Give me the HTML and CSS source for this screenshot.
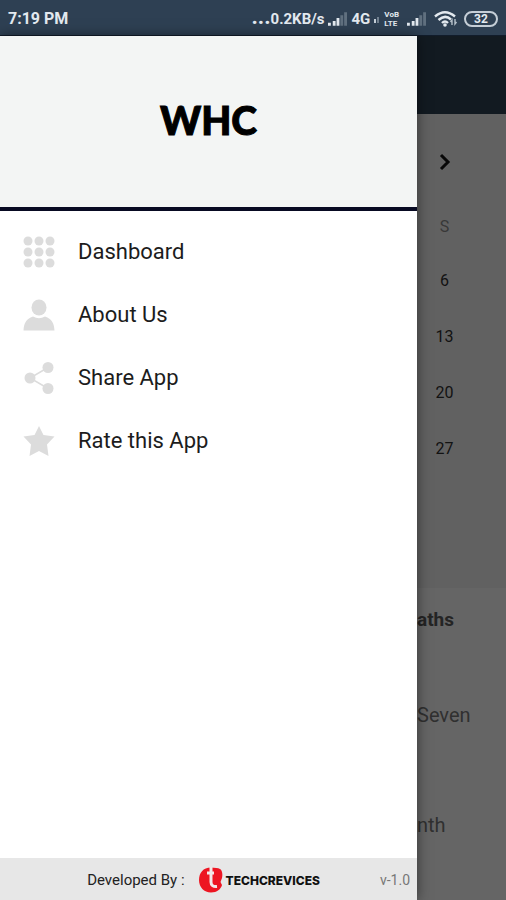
FILE: index.html
```html
<!DOCTYPE html>
<html lang="en">
<head>
    <meta charset="UTF-8" />
    <meta name="viewport" content="width=device-width, initial-scale=1.0"/>
    <title>WHC</title>
    <link rel="stylesheet" href="styles.css">
</head>
<body>
<header class="status-bar">
    <span class="time">7:19 PM</span>
    <div class="status-icons">
        <span class="speed"><span class="dots">...</span>0.2KB/s</span>
        <svg class="signal" viewBox="0 0 20 14">
            <path d="M0 11h3v3H0zM5 9h3v5H5zM9 6h3v8H9z" fill="#e3e9ef"/>
            <path d="M13 3h3v11h-3zM17 0h3v14h-3z" fill="#60707f"/>
        </svg>
        <span class="network">4G</span>
        <svg class="data" viewBox="0 0 6 8">
            <path d="M0 4h2v4H0z" fill="#c5ced7"/>
            <path d="M3 2h2v6H3z" fill="#71808f"/>
        </svg>
        <span class="volte"><span>VoB</span><span>LTE</span></span>
        <svg class="signal" viewBox="0 0 20 14">
            <path d="M0 11h3v3H0zM5 9h3v5H5zM9 6h3v8H9z" fill="#e3e9ef"/>
            <path d="M13 3h3v11h-3zM17 0h3v14h-3z" fill="#60707f"/>
        </svg>
        <svg class="wifi" viewBox="0 0 24 16">
            <path d="M1 5.500Q11 -3 21 5.500M4.500 9Q11 3 17 8.500M8 12Q11 9 14 12" fill="none" stroke="#e3e9ef" stroke-width="2.400"/>
            <circle cx="11" cy="14" r="1.800" fill="#e3e9ef"/>
            <path d="M18 14V9l-1.500 2M21 8v5l1.500-2" fill="none" stroke="#b4bfc9" stroke-width="1.400"/>
        </svg>
        <span class="battery">32</span>
    </div>
</header>

<div class="screen">
    <nav class="drawer">
        <div class="drawer-header">
            <h1>WHC</h1>
        </div>

        <ul class="menu">
            <li>
                <a href="#dashboard">
                    <svg viewBox="0 0 32 32">
                        <circle cx="5" cy="5" r="4.500"/><circle cx="16" cy="5" r="4.500"/><circle cx="27" cy="5" r="4.500"/>
                        <circle cx="5" cy="16" r="4.500"/><circle cx="16" cy="16" r="4.500"/><circle cx="27" cy="16" r="4.500"/>
                        <circle cx="5" cy="27" r="4.500"/><circle cx="16" cy="27" r="4.500"/><circle cx="27" cy="27" r="4.500"/>
                    </svg>
                    Dashboard
                </a>
            </li>
            <li>
                <a href="#about">
                    <svg viewBox="0 0 32 32">
                        <ellipse cx="16" cy="8.500" rx="7.500" ry="8"/>
                        <path d="M0.500 31.500C1 24 3 20 10 17.500Q16 21 22 17.500C29 20 31 24 31.500 31.500Z"/>
                    </svg>
                    About Us
                </a>
            </li>
            <li>
                <a href="#share">
                    <svg viewBox="0 0 32 32">
                        <path d="M25 5.500L7 16L25 26.500" fill="none" stroke="#dcdcdc" stroke-width="1.500"/>
                        <circle cx="25" cy="5.500" r="5.500"/><circle cx="7" cy="16" r="5.500"/><circle cx="25" cy="26.500" r="5.500"/>
                    </svg>
                    Share App
                </a>
            </li>
            <li>
                <a href="#rate">
                    <svg viewBox="0 0 32 32">
                        <path d="M16 1L20.500 10L31.500 11.500L24 19.500L25.500 31L16 26L6.500 31L8 19.500L0.500 11.500L11.500 10Z"/>
                    </svg>
                    Rate this App
                </a>
            </li>
        </ul>

        <footer class="drawer-footer">
            <div class="credit">
                <span>Developed By :</span>
                <span class="brand">
                    <svg viewBox="0 0 26 26">
                        <path d="M13 0.500C5 0.500 1 6 1 13S6 25.500 13 25.500C19 25.500 23 22 24 18L22.500 15L24 11C25 7 24 3 22 2Q19 0.500 13 0.500Z" fill="#ed1522"/>
                        <path d="M13 0V15Q13 20 19 19.500M9 6H16" fill="none" stroke="#f2e8e8" stroke-width="3"/>
                    </svg>
                    TECHCREVICES
                </span>
            </div>
            <span class="version">v-1.0</span>
        </footer>
    </nav>

    <main class="page">
        <div class="app-bar"></div>
        <section class="calendar">
            <button class="next" type="button" aria-label="Next month">
                <svg viewBox="0 0 12 18"><path d="M2 2L9 9L2 16" fill="none" stroke="#080808" stroke-width="3"/></svg>
            </button>
            <span class="weekday">S</span>
            <span class="day">6</span>
            <span class="day">13</span>
            <span class="day">20</span>
            <span class="day">27</span>
        </section>
        <section class="events">
            <h2>aths</h2>
            <p>Seven</p>
            <p>nth</p>
        </section>
    </main>
</div>
</body>
</html>
```
FILE: styles.css
```css
* {
    box-sizing: border-box;
}

body {
    margin: 0;
    min-height: 100vh;
    display: flex;
    flex-direction: column;
    font-family: Roboto, Arial, sans-serif;
    background-color: #656565;
}

h1,
h2,
p,
ul {
    margin: 0;
    padding: 0;
}

/* status bar */
.status-bar {
    display: flex;
    align-items: center;
    justify-content: space-between;
    height: 36px;
    padding: 2px 8px 0;
    background-color: #2e4053;
    border-bottom: 1px solid #111c2b;
    color: #e3e9ef;
    font-size: 16px;
    font-weight: 700;
}

.status-icons {
    display: flex;
    align-items: center;
    gap: 4px;
}

.speed {
    font-size: 15px;
    line-height: 16px;
    padding-bottom: 2px;
}

.dots {
    font-size: 22px;
}

.signal {
    width: 19px;
    height: 14px;
}

.network {
    font-size: 15px;
}

.data {
    width: 6px;
    height: 8px;
}

.volte {
    display: flex;
    flex-direction: column;
    font-size: 8px;
    line-height: 9px;
    margin-right: 4px;
}

.wifi {
    width: 24px;
    height: 16px;
    margin-left: 4px;
}

.battery {
    width: 34px;
    height: 16px;
    margin-left: 2px;
    border: 2px solid #c5ced7;
    border-radius: 8px;
    font-size: 12px;
    line-height: 12px;
    text-align: center;
}

.screen {
    flex: 1;
    display: flex;
}

/* drawer */
.drawer {
    flex: 1;
    display: flex;
    flex-direction: column;
    background-color: #fff;
    box-shadow: 0 0 12px rgba(0, 0, 0, 0.5);
    z-index: 1;
}

.drawer-header {
    display: flex;
    align-items: center;
    justify-content: center;
    height: 175px;
    padding-bottom: 4px;
    background-color: #f3f5f4;
    border-bottom: 4px solid #080a22;
}

.drawer-header h1 {
    font-family: Lato, sans-serif;
    font-size: 39px;
    font-weight: 900;
    color: #000;
    -webkit-text-stroke: 1px #000;
}

.menu {
    flex: 1;
    padding-top: 9px;
    list-style: none;
}

.menu a {
    display: flex;
    align-items: center;
    gap: 23px;
    height: 63px;
    padding-left: 23px;
    color: #1c1c1c;
    font-size: 22px;
    text-decoration: none;
}

.menu svg {
    width: 32px;
    height: 32px;
    fill: #dcdcdc;
}

.drawer-footer {
    display: flex;
    align-items: center;
    justify-content: flex-end;
    gap: 60px;
    height: 42px;
    padding: 2px 7px 0 0;
    background-color: #e7e7e7;
    color: #222;
    font-size: 15px;
}

.credit,
.brand {
    display: flex;
    align-items: center;
}

.credit {
    gap: 13px;
}

.brand {
    gap: 2px;
    color: #111;
    font-family: Inter, sans-serif;
    font-size: 12px;
    font-weight: 800;
}

.brand svg {
    width: 26px;
    height: 26px;
}

.version {
    color: #777;
    font-size: 14px;
}

/* dimmed page behind the drawer */
.page {
    width: 89px;
    display: flex;
    flex-direction: column;
    background-color: #656565;
}

.app-bar {
    height: 78px;
    background-color: #121a21;
}

.calendar {
    display: flex;
    flex-direction: column;
    align-items: center;
    height: 474px;
    padding: 36px 34px 0 0;
    background-color: #616161;
    font-size: 16px;
}

.next {
    display: flex;
    align-items: center;
    justify-content: center;
    width: 24px;
    height: 24px;
    margin-bottom: 27px;
    padding: 0;
    border: none;
    background: none;
}

.next svg {
    width: 12px;
    height: 18px;
}

.weekday {
    height: 52px;
    line-height: 52px;
    color: #383838;
}

.day {
    height: 56px;
    line-height: 56px;
    color: #121212;
}

.events {
    display: flex;
    flex-direction: column;
    gap: 86px;
    padding-top: 20px;
    color: #303030;
    font-size: 20px;
    line-height: 24px;
}

.events h2 {
    font-size: 19px;
    line-height: 24px;
    color: #242424;
    margin-bottom: -15px;
}
```
